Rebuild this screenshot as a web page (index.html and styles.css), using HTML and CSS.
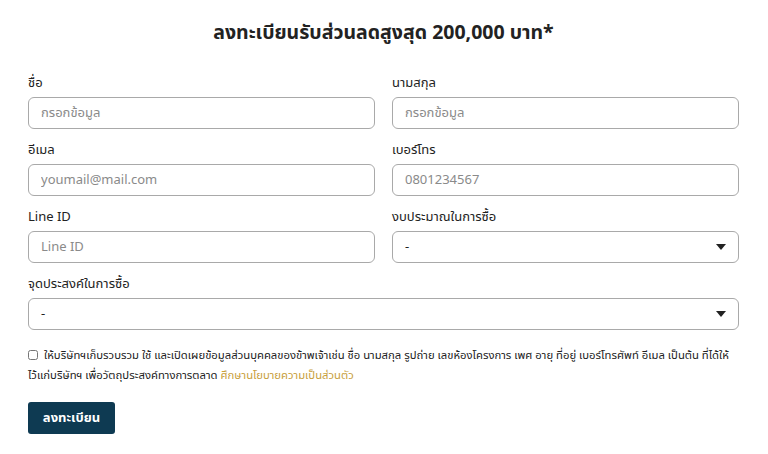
FILE: index.html
```html
<!DOCTYPE html>
<html lang="th">
<head>
    <meta charset="UTF-8">
    <meta name="viewport" content="width=device-width, initial-scale=1.0">
    <title>ลงทะเบียน</title>
    <link rel="stylesheet" href="styles.css">
</head>
<body>
    <section class="register">
        <h1>ลงทะเบียนรับส่วนลดสูงสุด 200,000 บาท*</h1>

        <form class="register-form">
            <div class="form-grid">
                <div class="field">
                    <label>ชื่อ</label>
                    <input type="text" placeholder="กรอกข้อมูล">
                </div>
                <div class="field">
                    <label>นามสกุล</label>
                    <input type="text" placeholder="กรอกข้อมูล">
                </div>
                <div class="field">
                    <label>อีเมล</label>
                    <input type="email" placeholder="youmail@mail.com">
                </div>
                <div class="field">
                    <label>เบอร์โทร</label>
                    <input type="tel" placeholder="0801234567">
                </div>
                <div class="field">
                    <label>Line ID</label>
                    <input type="text" placeholder="Line ID">
                </div>
                <div class="field">
                    <label>งบประมาณในการซื้อ</label>
                    <div class="select">
                        <span>-</span>
                        <svg width="10" height="6" viewBox="0 0 10 6"><path d="M0 0h10L5 6z" fill="#222"/></svg>
                    </div>
                </div>
                <div class="field full">
                    <label>จุดประสงค์ในการซื้อ</label>
                    <div class="select">
                        <span>-</span>
                        <svg width="10" height="6" viewBox="0 0 10 6"><path d="M0 0h10L5 6z" fill="#222"/></svg>
                    </div>
                </div>
            </div>

            <p class="consent">
                <input type="checkbox" class="check">
                ให้บริษัทฯเก็บรวบรวม ใช้ และเปิดเผยข้อมูลส่วนบุคคลของข้าพเจ้าเช่น ชื่อ นามสกุล รูปถ่าย เลขห้องโครงการ เพศ อายุ ที่อยู่ เบอร์โทรศัพท์ อีเมล เป็นต้น ที่ได้ให้<br>ไว้แก่บริษัทฯ เพื่อวัตถุประสงค์ทางการตลาด
                <a href="#">ศึกษานโยบายความเป็นส่วนตัว</a>
            </p>

            <button type="button" class="btn">ลงทะเบียน</button>
        </form>
    </section>
</body>
</html>
```

FILE: styles.css
```css
body {
    font-family: "Noto Sans Thai", "Noto Sans", sans-serif;
    margin: 0;
    padding: 0;
    background-color: #fff;
    color: #222;
}

.register {
    padding: 18px 29px 0 28px;
}

h1 {
    text-align: center;
    font-size: 19.5px;
    font-weight: 700;
    margin: 0 0 26px;
    line-height: 30px;
}

.form-grid {
    display: grid;
    grid-template-columns: 1fr 1fr;
    column-gap: 17px;
    row-gap: 12px;
}

.field.full {
    grid-column: 1 / 3;
}

.field label {
    display: block;
    font-size: 13px;
    line-height: 18px;
    margin-bottom: 5px;
}

.field input,
.select {
    box-sizing: border-box;
    width: 100%;
    height: 32px;
    border: 1px solid #a9a9a9;
    border-radius: 6px;
    padding: 0 12px;
    font-family: inherit;
    font-size: 13px;
    color: #222;
    background: #fff;
}

.field input::placeholder {
    color: #8a8a8a;
}

.select {
    display: flex;
    align-items: center;
    justify-content: space-between;
}

.consent {
    font-size: 11.3px;
    line-height: 20px;
    margin: 16px 0 16px;
    color: #222;
    white-space: nowrap;
}

.check {
    width: 10px;
    height: 10px;
    margin: 0 3px 0 0;
    vertical-align: -1px;
}

.consent a {
    color: #c8a03c;
    text-decoration: none;
}

.btn {
    background-color: #0e3a52;
    color: #fff;
    border: none;
    border-radius: 3px;
    width: 87px;
    height: 32px;
    font-family: inherit;
    font-size: 13px;
    font-weight: 700;
}
```
